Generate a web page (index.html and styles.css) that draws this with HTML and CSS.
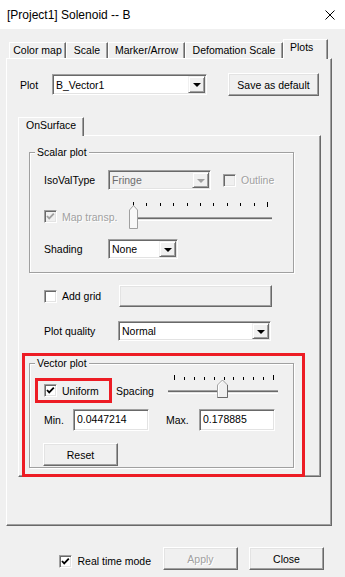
FILE: index.html
```html
<!DOCTYPE html>
<html lang="en">
<head>
    <meta charset="UTF-8">
    <meta name="viewport" content="width=device-width, initial-scale=1.0">
    <title>[Project1] Solenoid -- B</title>
    <link rel="stylesheet" href="styles.css">
</head>
<body>
    <div class="titlebar">
        <span class="title">[Project1] Solenoid -- B</span>
        <svg class="close-x" width="10" height="10" viewBox="0 0 10 10">
            <path d="M0.5 0.5 L9.5 9.5 M9.5 0.5 L0.5 9.5" stroke="#000" stroke-width="1" fill="none"/>
        </svg>
    </div>

    <div class="dialog">
        <div class="tabs">
            <div class="tab w-colormap">Color map</div>
            <div class="tab w-scale">Scale</div>
            <div class="tab w-marker">Marker/Arrow</div>
            <div class="tab w-defo">Defomation Scale</div>
            <div class="tab tab-active w-plots">Plots</div>
        </div>

        <div class="panel">
            <div class="plot-row">
                <span class="plot-lbl">Plot</span>
                <div class="combo plot-combo">
                    <span class="combo-text">B_Vector1</span>
                    <span class="combo-btn"></span>
                </div>
                <button class="btn save-btn">Save as default</button>
            </div>

            <div class="subtab">OnSurface</div>
            <div class="subpanel">
                <div class="group">
                    <div class="group-title">Scalar plot</div>
                    <div class="row iso-row">
                        <span class="lbl-64">IsoValType</span>
                        <div class="combo combo-off fringe-combo">
                            <span class="combo-text">Fringe</span>
                            <span class="combo-btn"></span>
                        </div>
                        <label class="chk-label off outline-chk"><span class="chk chk-off"></span>Outline</label>
                    </div>
                    <div class="row map-row">
                        <label class="chk-label off map-chk">
                            <span class="chk chk-off">
                                <svg width="11" height="11" viewBox="0 0 11 11"><polyline points="2,5 4.2,7.4 8.8,2.6" fill="none" stroke="#a0a0a0" stroke-width="1.8"/></svg>
                            </span>Map transp.
                        </label>
                        <svg class="slider" width="148" height="31" viewBox="0 0 148 31">
                            <g fill="#000">
                                <rect x="6" y="2" width="1" height="5"/>
                                <rect x="19" y="3" width="1" height="3"/>
                                <rect x="33" y="3" width="1" height="3"/>
                                <rect x="46" y="3" width="1" height="3"/>
                                <rect x="60" y="3" width="1" height="3"/>
                                <rect x="73" y="3" width="1" height="3"/>
                                <rect x="86" y="3" width="1" height="3"/>
                                <rect x="100" y="3" width="1" height="3"/>
                                <rect x="113" y="3" width="1" height="3"/>
                                <rect x="127" y="3" width="1" height="3"/>
                                <rect x="140" y="2" width="1" height="5"/>
                            </g>
                            <rect x="8" y="17" width="137" height="1" fill="#a0a0a0"/>
                            <rect x="8" y="18" width="137" height="1" fill="#696969"/>
                            <rect x="8" y="19" width="137" height="1" fill="#e3e3e3"/>
                            <rect x="8" y="20" width="137" height="1" fill="#fff"/>
                            <polygon points="2.5,10 6.5,5.5 10.5,10 10.5,28.5 2.5,28.5" fill="#f8f8f8" stroke="#a0a0a0"/>
                        </svg>
                    </div>
                    <div class="row shade-row">
                        <span class="lbl-64">Shading</span>
                        <div class="combo shade-combo">
                            <span class="combo-text">None</span>
                            <span class="combo-btn"></span>
                        </div>
                    </div>
                </div>

                <div class="row grid-row">
                    <label class="chk-label grid-chk"><span class="chk"></span>Add grid</label>
                    <button class="btn color-btn"></button>
                </div>
                <div class="row quality-row">
                    <span class="quality-lbl">Plot quality</span>
                    <div class="combo quality-combo">
                        <span class="combo-text">Normal</span>
                        <span class="combo-btn"></span>
                    </div>
                </div>

                <div class="mark">
                    <div class="group vector">
                        <div class="group-title">Vector plot</div>
                        <div class="row uniform-row">
                            <div class="mark-small">
                                <label class="chk-label">
                                    <span class="chk">
                                        <svg width="11" height="11" viewBox="0 0 11 11"><polyline points="2,5 4.2,7.4 8.8,2.6" fill="none" stroke="#000" stroke-width="1.8"/></svg>
                                    </span>Uniform
                                </label>
                            </div>
                            <span class="spacing-lbl">Spacing</span>
                            <svg class="slider" width="115" height="33" viewBox="0 0 115 33">
                                <g fill="#000">
                                    <rect x="9" y="1" width="1" height="5"/>
                                    <rect x="19" y="3" width="1" height="3"/>
                                    <rect x="29" y="3" width="1" height="3"/>
                                    <rect x="39" y="3" width="1" height="3"/>
                                    <rect x="49" y="3" width="1" height="3"/>
                                    <rect x="59" y="3" width="1" height="3"/>
                                    <rect x="68" y="3" width="1" height="3"/>
                                    <rect x="78" y="3" width="1" height="3"/>
                                    <rect x="88" y="3" width="1" height="3"/>
                                    <rect x="98" y="3" width="1" height="3"/>
                                    <rect x="108" y="1" width="1" height="5"/>
                                </g>
                                <rect x="3" y="16" width="110" height="1" fill="#a0a0a0"/>
                                <rect x="3" y="17" width="110" height="1" fill="#696969"/>
                                <rect x="3" y="18" width="110" height="1" fill="#e3e3e3"/>
                                <rect x="3" y="19" width="110" height="1" fill="#fff"/>
                                <polygon points="52.5,11 57.5,6 62.5,11 62.5,23.5 52.5,23.5" fill="#f0f0f0" stroke="#a0a0a0"/>
                                <path d="M53.5 11.3 L57.5 7.3 M53.5 11.5 L53.5 22.5" stroke="#fff" fill="none"/>
                                <path d="M62.5 11 L62.5 23.5 L52.5 23.5" stroke="#696969" fill="none"/>
                            </svg>
                        </div>
                        <div class="row range-row">
                            <span class="min-lbl">Min.</span>
                            <input class="field" type="text" value="0.0447214">
                            <span class="max-lbl">Max.</span>
                            <input class="field" type="text" value="0.178885">
                        </div>
                        <button class="btn reset-btn">Reset</button>
                    </div>
                </div>
            </div>
        </div>

        <div class="footer">
            <label class="chk-label realtime-chk">
                <span class="chk">
                    <svg width="11" height="11" viewBox="0 0 11 11"><polyline points="2,5 4.2,7.4 8.8,2.6" fill="none" stroke="#000" stroke-width="1.8"/></svg>
                </span>Real time mode
            </label>
            <button class="btn foot-btn btn-off">Apply</button>
            <button class="btn foot-btn">Close</button>
        </div>
    </div>
</body>
</html>
```

FILE: styles.css
```css
body {
    margin: 0;
    background: #f0f0f0;
    font-family: "Liberation Sans", Arial, sans-serif;
    font-size: 10.5px;
    color: #000;
}

/* title bar */
.titlebar {
    height: 29px;
    box-sizing: border-box;
    background: #fff;
    display: flex;
    align-items: center;
    justify-content: space-between;
    padding: 0 10px 0 7px;
}
.title {
    font-size: 12px;
}
.close-x {
    display: block;
}

.dialog {
    padding: 10px 0 0 6px;
}

/* top tabs */
.tabs {
    display: flex;
    align-items: flex-end;
    height: 19px;
    padding-left: 3px;
}
.tab {
    height: 16px;
    box-sizing: border-box;
    border-left: 1px solid #fff;
    border-top: 1px solid #fff;
    border-right: 1px solid #696969;
    box-shadow: inset -1px 0 #a0a0a0;
    line-height: 15px;
    text-align: center;
    white-space: nowrap;
}
.w-colormap { width: 57px; }
.w-scale { width: 42px; }
.w-marker { width: 77px; }
.w-defo { width: 98px; }
.w-plots { width: 45px; }
.tab-active {
    height: 20px;
    margin-bottom: -1px;
    position: relative;
    z-index: 1;
    background: #f0f0f0;
    line-height: 15px;
    text-align: left;
    padding-left: 6px;
}

/* main panel */
.panel {
    width: 326px;
    height: 468px;
    box-sizing: border-box;
    border: 1px solid;
    border-color: #fff #696969 #696969 #fff;
    box-shadow: inset -1px -1px #a0a0a0;
    padding: 14px 0 0 11px;
}
.plot-row {
    display: flex;
    align-items: center;
    height: 23px;
    margin-left: 2px;
}
.plot-lbl {
    width: 32px;
}
.plot-combo {
    width: 155px;
    height: 21px;
}
.save-btn {
    margin-left: 21px;
    width: 91px;
    height: 23px;
}

/* OnSurface tab */
.subtab {
    margin-top: 21px;
    width: 66px;
    height: 19px;
    box-sizing: border-box;
    border-left: 1px solid #fff;
    border-top: 1px solid #fff;
    border-right: 1px solid #696969;
    box-shadow: inset -1px 0 #a0a0a0;
    line-height: 14px;
    padding-left: 7px;
    margin-bottom: -1px;
    position: relative;
    z-index: 1;
    background: #f0f0f0;
}
.subpanel {
    width: 303px;
    height: 342px;
    box-sizing: border-box;
    border: 1px solid;
    border-color: #fff #696969 #696969 #fff;
    box-shadow: inset -1px -1px #a0a0a0;
    padding: 16px 0 0 10px;
}

/* group boxes */
.group {
    width: 265px;
    box-sizing: border-box;
    border: 1px solid #a0a0a0;
    box-shadow: 1px 1px 0 #fff, inset 1px 1px 0 #fff;
    padding: 0 0 13px 14px;
}
.group-title {
    width: fit-content;
    margin: -7px 0 0 -9px;
    padding: 0 2px;
    line-height: 12px;
    background: #f0f0f0;
}
.row {
    display: flex;
    align-items: center;
}
.lbl-64 {
    width: 64px;
}
.iso-row {
    margin-top: 12px;
    height: 20px;
}
.fringe-combo {
    width: 103px;
    height: 20px;
}
.outline-chk {
    margin-left: 12px;
}
.map-row {
    margin-top: 10px;
    align-items: flex-start;
}
.map-chk {
    width: 83px;
    margin-top: 10px;
}
.slider {
    display: block;
}
.shade-row {
    margin-top: 8px;
    height: 20px;
}
.shade-combo {
    width: 70px;
    height: 20px;
}

.grid-row {
    margin: 12px 0 0 15px;
    height: 22px;
}
.grid-chk {
    width: 75px;
}
.color-btn {
    width: 153px;
    height: 22px;
    background: #fbfbfb;
}
.quality-row {
    margin: 14px 0 0 15px;
    height: 20px;
}
.quality-lbl {
    width: 74px;
}
.quality-combo {
    width: 153px;
    height: 20px;
}

/* red marks */
.mark {
    margin: 12px 0 -1px -7px;
    width: 283px;
    box-sizing: border-box;
    border: 3px solid #ed1c24;
    padding: 7px 0 6px 4px;
}
.mark-small {
    width: 77px;
    height: 25px;
    box-sizing: border-box;
    border: 3px solid #ed1c24;
    margin-left: -9px;
    padding-left: 6px;
    display: flex;
    align-items: center;
}
.vector {
    padding-bottom: 1px;
}
.uniform-row {
    margin-top: 5px;
}
.spacing-lbl {
    margin-left: 4px;
    width: 49px;
}
.range-row {
    margin-top: 2px;
    height: 22px;
}
.min-lbl {
    width: 29px;
}
.max-lbl {
    margin-left: 17px;
    width: 33px;
}
.field {
    width: 76px;
    height: 22px;
    box-sizing: border-box;
    border: 1px solid;
    border-color: #a0a0a0 #fff #fff #a0a0a0;
    box-shadow: inset 1px 1px #696969, inset -1px -1px #e3e3e3;
    background: #fff;
    font: inherit;
    padding: 0 3px 2px;
    margin: 0;
    outline: none;
}
.reset-btn {
    display: block;
    margin: 12px 0 0 -1px;
    width: 75px;
    height: 23px;
}

/* controls */
.combo {
    display: flex;
    box-sizing: border-box;
    border: 1px solid;
    border-color: #a0a0a0 #fff #fff #a0a0a0;
    box-shadow: inset 1px 1px #696969, inset -1px -1px #e3e3e3;
    background: #fff;
    padding: 1px;
}
.combo-text {
    flex: 1;
    padding-left: 2px;
    display: flex;
    align-items: center;
}
.combo-btn {
    width: 17px;
    box-sizing: border-box;
    border: 1px solid;
    border-color: #f0f0f0 #696969 #696969 #f0f0f0;
    box-shadow: inset 1px 1px #fff, inset -1px -1px #a0a0a0;
    background: #f0f0f0;
    display: flex;
    align-items: center;
    justify-content: center;
}
.combo-btn::after {
    content: "";
    border-top: 4px solid #000;
    border-left: 4px solid transparent;
    border-right: 4px solid transparent;
    margin-top: 1px;
}
.combo-off {
    background: #f0f0f0;
}
.combo-off .combo-text {
    color: #6d6d6d;
}
.combo-off .combo-btn::after {
    border-top-color: #a0a0a0;
}

.chk-label {
    display: flex;
    align-items: center;
    gap: 5px;
    white-space: nowrap;
}
.chk {
    width: 13px;
    height: 13px;
    box-sizing: border-box;
    border: 1px solid;
    border-color: #a0a0a0 #fff #fff #a0a0a0;
    box-shadow: inset 1px 1px #696969, inset -1px -1px #e3e3e3;
    background: #fff;
    flex: none;
}
.chk svg {
    display: block;
}
.chk-off {
    background: #f0f0f0;
}
.off {
    color: #a0a0a0;
    text-shadow: 1px 1px #fff;
}

.btn {
    font: inherit;
    color: #000;
    box-sizing: border-box;
    border: 1px solid;
    border-color: #fff #696969 #696969 #fff;
    box-shadow: inset -1px -1px #a0a0a0, inset 1px 1px #e3e3e3;
    background: #f0f0f0;
    padding: 0;
}
.btn-off {
    color: #a0a0a0;
    text-shadow: 1px 1px #fff;
}

/* bottom */
.footer {
    display: flex;
    justify-content: flex-end;
    align-items: center;
    margin-top: 21px;
    padding-right: 21px;
}
.realtime-chk {
    margin: 5px 12px 0 0;
}
.foot-btn {
    width: 75px;
    height: 23px;
}
.foot-btn + .foot-btn {
    margin-left: 11px;
}
```
